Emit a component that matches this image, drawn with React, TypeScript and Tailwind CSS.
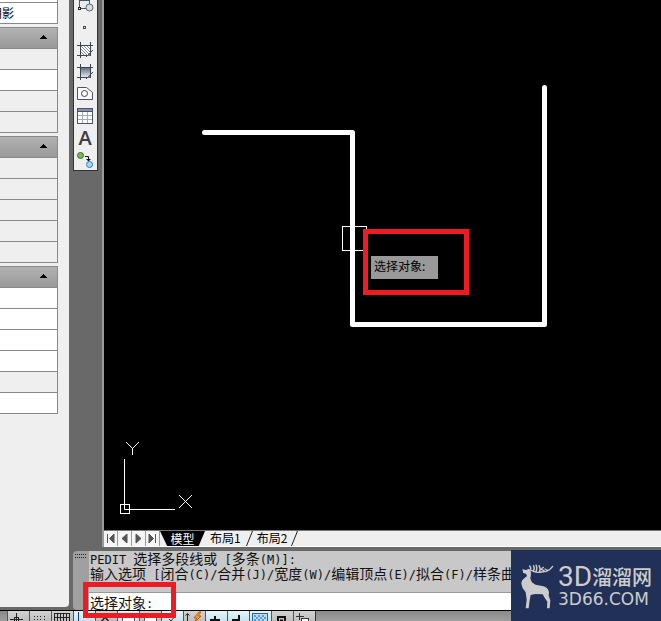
import type { ReactNode } from "react";

type Shade = "white" | "gray";

const groups: Shade[][] = [
  ["gray", "white", "gray", "gray"],
  ["gray", "gray", "gray", "gray", "gray"],
  ["white", "white", "white", "white", "gray", "white"],
];

function PropertyGroup({ rows }: { rows: Shade[] }) {
  return (
    <section className="border-t border-r border-[#898989]">
      <button
        aria-label="Collapse group"
        className="flex h-[21px] w-full items-center justify-end border-b border-[#898989] bg-linear-to-b from-[#b2b2b2] to-[#999999] pr-2.5 pb-0.5"
      >
        <svg width="7" height="4" viewBox="0 0 7 4" shapeRendering="crispEdges">
          <path d="M3 0h1v1h1v1h1v1h1v1H0V3h1V2h1V1h1z" fill="#000" />
        </svg>
      </button>
      {rows.map((shade, i) => (
        <div
          key={i}
          className={`h-[21px] border-b border-[#898989] ${shade === "white" ? "bg-white" : "bg-[#efefef]"}`}
        />
      ))}
    </section>
  );
}

function PropertiesPanel() {
  return (
    <aside className="mb-[3px] w-[69px] shrink-0 overflow-hidden rounded-br bg-[#efefef] pr-[11px]">
      <div className="flex flex-col gap-[3px]">
        <div className="border-r border-[#898989] bg-white">
          <div className="h-[3px] border-b border-[#898989]" />
          <div className="flex h-[21px] items-center border-b border-[#898989]">
            <span className="-ml-2.5 text-[12px] leading-[20px] whitespace-nowrap text-black">阴影</span>
          </div>
        </div>
        {groups.map((rows, i) => (
          <PropertyGroup key={i} rows={rows} />
        ))}
      </div>
    </aside>
  );
}

function Frame({ children }: { children: ReactNode }) {
  return (
    <>
      {children}
      <path d="M4.5 2v16M14.5 2v14M1 5.5h16M1 15.5h14" stroke="#3b4350" />
      <path d="M17 10l-7 7" stroke="#3b4350" />
      <path d="M14 13v3h-3z" fill="#68758a" />
    </>
  );
}

const tools: { name: string; icon: ReactNode }[] = [
  {
    name: "Revision cloud",
    icon: (
      <>
        <rect x="3.5" y="4.5" width="10" height="8" fill="#e6ecef" stroke="#4b5563" />
        <rect x="2.5" y="11.5" width="2" height="2" fill="#fff" stroke="#222" />
        <circle cx="13.5" cy="11.5" r="3.5" fill="#d7dde0" stroke="#5c6672" />
      </>
    ),
  },
  { name: "Point", icon: <rect x="7.5" y="8.5" width="2" height="2" fill="#fff" stroke="#3f4650" /> },
  {
    name: "Hatch",
    icon: (
      <Frame>
        <rect x="5" y="6" width="9" height="9" fill="#fff" />
        <path d="M5 6l9 9M8 6l6 6M11 6l3 3M5 9l6 6M5 12l3 3" stroke="#8a9099" />
      </Frame>
    ),
  },
  {
    name: "Gradient",
    icon: (
      <Frame>
        <defs>
          <linearGradient id="shade" x1="0" y1="0" x2="0" y2="1">
            <stop offset="0" stopColor="#66707d" />
            <stop offset="1" stopColor="#e4e7ea" />
          </linearGradient>
        </defs>
        <rect x="5" y="6" width="9" height="9" fill="url(#shade)" />
      </Frame>
    ),
  },
  {
    name: "Region",
    icon: (
      <>
        <path d="M1.5 3.5h9l6 5v7h-15z" fill="#f7f9fa" stroke="#4b5563" />
        <circle cx="8.5" cy="9.5" r="3" fill="#fff" stroke="#3b4350" />
      </>
    ),
  },
  {
    name: "Table",
    icon: (
      <>
        <rect x="1.5" y="2.5" width="15" height="15" fill="#fff" stroke="#4b5563" />
        <path d="M2 3h14v3H2z" fill="#8492a8" />
        <path d="M2 9.5h14M2 13.5h14M6.5 6v11M11.5 6v11" stroke="#a5abb2" />
        <path d="M2 5.5h14" stroke="#4b5563" />
      </>
    ),
  },
  { name: "Multiline text", icon: null },
  {
    name: "Add selected",
    icon: (
      <>
        <circle cx="4.5" cy="5.5" r="3" fill="#79b956" stroke="#35702b" />
        <path d="M9 6.5h3.5v3" stroke="#111" />
        <path d="M10 9h5l-2.5 2.5z" fill="#111" />
        <circle cx="13.5" cy="14.5" r="3" fill="#a9d8f5" stroke="#2c7fc0" />
      </>
    ),
  },
];

function DrawToolbar() {
  return (
    <nav
      aria-label="Draw"
      className="flex h-[171px] w-[25px] flex-col justify-end overflow-hidden border-x border-b border-[#333333] bg-[#efefef]"
    >
      {tools.map((tool) => (
        <button key={tool.name} aria-label={tool.name} className="flex h-[22px] shrink-0 items-center pl-0.5">
          {tool.icon ? (
            <svg width="18" height="18" viewBox="0 0 18 18" fill="none">
              {tool.icon}
            </svg>
          ) : (
            <span className="w-[18px] pt-0.5 text-center font-['Open_Sans'] text-[20px] leading-[22px] font-semibold text-[#3b3e44]">
              A
            </span>
          )}
        </button>
      ))}
    </nav>
  );
}

function Canvas() {
  return (
    <main className="relative min-h-0 flex-1 overflow-hidden bg-black">
      <svg width="557" height="530" viewBox="104 0 557 530" fill="none" stroke="#fff">
        <path
          d="M204.5 132.5H352.5V324.5H544.5V87.5"
          strokeWidth="5"
          strokeLinecap="round"
          strokeLinejoin="round"
        />
        <rect x="342.5" y="226.5" width="24" height="24" />
        <path d="M124.5 459V509.5H175" />
        <rect x="120.5" y="504.5" width="9" height="9" />
        <path d="M126 442l6.5 6.5L139 442M132.5 448v7M179 495l13 13M192 495l-13 13" />
      </svg>
      <div className="absolute top-[229px] left-[259px] h-[66px] w-[106px] border-[5px] border-[#ed1c24]" />
      <div className="absolute top-[256px] left-[267px] h-[23px] w-[67px] bg-[#999999] pl-[3px] text-[12px] leading-[20px] whitespace-nowrap text-black">
        选择对象:
      </div>
    </main>
  );
}

function Slash() {
  return (
    <svg width="7" height="15" viewBox="0 0 7 15" fill="none" className="shrink-0">
      <path d="M6.5 0L.5 15" stroke="#222" />
    </svg>
  );
}

const navArrows = ["M3.5 2v9M10 2v9L5.5 6.5z", "M9 2v9L4 6.5z", "M4 2v9l5-4.5z", "M3 2v9l4.5-4.5zM9.5 2v9"];
const navNames = ["First layout", "Previous layout", "Next layout", "Last layout"];

function LayoutTabs() {
  return (
    <div className="flex h-[17px] shrink-0 items-start overflow-hidden border-t border-b border-t-[#777777] border-b-white bg-[#efefef] text-[12px] leading-[14px] text-black">
      {navArrows.map((d, i) => (
        <button key={d} aria-label={navNames[i]} className="h-[15px] w-[14px] shrink-0 border-r border-[#999999] bg-[#f5f5f5]">
          <svg width="13" height="14" viewBox="0 0 13 14">
            <path d={d} fill="#555" stroke="#555" strokeWidth="1" />
          </svg>
        </button>
      ))}
      <button className="h-[15px] w-[45px] shrink-0 bg-black text-white [clip-path:polygon(0_0,100%_0,86%_100%,16%_100%)]">
        模型
      </button>
      <button className="shrink-0 px-[5px]">布局1</button>
      <Slash />
      <button className="shrink-0 px-1">布局2</button>
      <Slash />
    </div>
  );
}

function Half({ children }: { children: ReactNode }) {
  return <span className="font-['DejaVu_Sans_Mono'] text-[12px] leading-none">{children}</span>;
}

function CommandLine() {
  return (
    <section className="mt-1 ml-1 flex h-[59px] shrink-0 rounded-l bg-[#a0a0a0]">
      <div className="w-4 shrink-0 pt-[3px] pl-0.5">
        <svg width="12" height="4" viewBox="0 0 12 4" shapeRendering="crispEdges">
          <path d="M0 .5h12M0 3.5h12" stroke="#222" strokeDasharray="1 1" />
        </svg>
      </div>
      <div className="min-w-0 flex-1 text-[14px] whitespace-pre text-[#111111]">
        <div className="h-[42px] border-b border-[#999999] bg-[#c8c8c8] pl-px leading-[15px]">
          <p className="h-[15px]">
            <Half>PEDIT </Half>选择多段线或<Half> [</Half>多条<Half>(M)]:</Half>
          </p>
          <p className="h-[15px]">
            输入选项<Half> [</Half>闭合<Half>(C)/</Half>合并<Half>(J)/</Half>宽度<Half>(W)/</Half>编辑顶点
            <Half>(E)/</Half>拟合<Half>(F)/</Half>样条曲
          </p>
        </div>
        <div className="flex h-[17px] items-center bg-white pt-0.5 pl-px">
          <label htmlFor="command" className="leading-[15px]">
            选择对象<Half>:</Half>
          </label>
          <input id="command" className="h-[15px] min-w-0 flex-1 pl-1 outline-none" />
        </div>
      </div>
    </section>
  );
}

const modes: { name: string; on: boolean; icon: ReactNode }[] = [
  {
    name: "Infer",
    on: false,
    icon: (
      <>
        <path d="M2 8.5h13M8.5 2v14" stroke="#222" />
        <rect x="6.5" y="6.5" width="4" height="4" stroke="#222" />
      </>
    ),
  },
  { name: "Snap", on: false, icon: <path d="M4 5.5h9M4 8.5h9M14.5 5v8" stroke="#222" strokeDasharray="1 2" /> },
  {
    name: "Grid",
    on: false,
    icon: <path d="M2 2.5h16M2 6.5h16M2 10.5h16M2.5 2v12M5.5 2v12M8.5 2v12M11.5 2v12M14.5 2v12M17.5 2v12" stroke="#222" />,
  },
  { name: "Ortho", on: true, icon: <path d="M4.5 1v15" stroke="#123b6b" /> },
  { name: "Polar", on: false, icon: <path d="M4 12L12 3M9 6l5 6" stroke="#222" strokeWidth="1.5" /> },
  { name: "Object snap", on: true, icon: <rect x="4.5" y="6.5" width="12" height="8" fill="#fff" stroke="#555" /> },
  { name: "3D snap", on: false, icon: <rect x="4.5" y="6.5" width="12" height="8" fill="#fff" stroke="#555" /> },
  { name: "Tracking", on: true, icon: <path d="M7 8l2 2 5-6" stroke="#333" /> },
  {
    name: "Dynamic UCS",
    on: false,
    icon: (
      <>
        <path d="M3.5 3v12M1.5 4.5l2-2 2 2" stroke="#222" />
        <path d="M15 1l-5 6h3l-3 5 7-7h-3l3-4z" fill="#f6a623" stroke="#c25b10" />
      </>
    ),
  },
  { name: "Dynamic input", on: true, icon: <path d="M4 9h10M9 5v8" stroke="#111" strokeWidth="2" /> },
  { name: "Lineweight", on: true, icon: <path d="M4 9h7V4" stroke="#111" strokeWidth="2" /> },
  {
    name: "Transparency",
    on: true,
    icon: (
      <>
        <rect x="2.5" y="2.5" width="15" height="13" fill="#b9dcf3" stroke="#2465b0" />
        <path d="M4 5h12M4 9h12" stroke="#5b9bd0" strokeWidth="2" strokeDasharray="2 2" />
        <path d="M6 7h10" stroke="#5b9bd0" strokeWidth="2" strokeDasharray="2 2" />
      </>
    ),
  },
  { name: "Quick properties", on: false, icon: <path d="M6 14V6h7v8M8 9.5h3" stroke="#111" strokeWidth="2" /> },
  {
    name: "Selection cycling",
    on: false,
    icon: (
      <>
        <path d="M2 5.5h8M5.5 2v7" stroke="#333" />
        <rect x="7.5" y="7.5" width="7" height="6" fill="#fff" stroke="#333" />
      </>
    ),
  },
];

function StatusBar() {
  return (
    <footer className="flex h-[11px] shrink-0 overflow-hidden border-t border-black bg-linear-to-b from-[#8a8a8a] to-[#a0a0a0] pl-[7px]">
      {modes.map((mode) => (
        <button
          key={mode.name}
          aria-label={mode.name}
          aria-pressed={mode.on}
          className={`flex h-[22px] w-[22px] shrink-0 items-start border-l border-[#555555] ${mode.on ? "bg-linear-to-b from-[#e6f4f8] to-[#9fd0de]" : "bg-linear-to-b from-[#d2d2d2] to-[#a8a8a8]"}`}
        >
          <svg width="20" height="18" viewBox="0 0 20 18" fill="none">
            {mode.icon}
          </svg>
        </button>
      ))}
      <span className="border-l border-[#333333]" />
    </footer>
  );
}

function Watermark() {
  return (
    <div className="absolute right-0 bottom-0 flex h-[71px] w-[150px] items-center bg-[#213056] pl-[9px] text-[#cccccc]">
      <svg width="34" height="48" viewBox="58 127 102 144" fill="none" className="shrink-0">
        <path
          d="M66 153L65 149L77 151L84 147L90 154L91 163L89 176Q91 190 105 195L128 200Q142 204 145 217L144 228L149 242L147 266L139 266L140 246L131 233L126 224L104 223L90 226L87 242L84 266L75 266L78 240L75 218Q63 205 62 192Q62 182 72 175L79 169L76 162L68 160Z"
          fill="currentColor"
        />
        <path
          d="M88 151Q93 146 87 139M90 151L98 155Q110 160 122 157L137 155Q149 150 156 140M98 154Q104 146 98 138M106 157Q111 145 106 136M116 157Q121 148 115 138M120 150L128 143M132 155L124 150M141 153L133 148"
          stroke="currentColor"
          strokeWidth="4"
          strokeLinecap="round"
        />
      </svg>
      <div className="flex flex-col pl-1">
        <div className="flex items-center whitespace-nowrap">
          <span className="font-['Roboto'] text-[28px] leading-[26px]">3D</span>
          <span className="text-[20px] leading-[26px] font-medium">溜溜网</span>
        </div>
        <span className="font-['DejaVu_Sans'] text-[17px] leading-[18px]">3D66.COM</span>
      </div>
    </div>
  );
}

export default function App() {
  return (
    <div className="relative flex h-screen flex-col overflow-hidden bg-[#696969] font-['Noto_Sans_CJK_SC',sans-serif]">
      <div className="flex min-h-0 flex-1">
        <PropertiesPanel />
        <div className="flex min-w-0 flex-1 flex-col">
          <div className="flex min-h-0 flex-1">
            <div className="w-[35px] shrink-0 border-r-2 border-[#999999] pl-1">
              <DrawToolbar />
            </div>
            <div className="flex min-w-0 flex-1 flex-col">
              <Canvas />
              <LayoutTabs />
            </div>
          </div>
          <CommandLine />
        </div>
      </div>
      <StatusBar />
      <Watermark />
      <div className="pointer-events-none absolute bottom-[3px] left-[83px] h-9 w-[93px] border-[5px] border-[#ed1c24]" />
    </div>
  );
}
